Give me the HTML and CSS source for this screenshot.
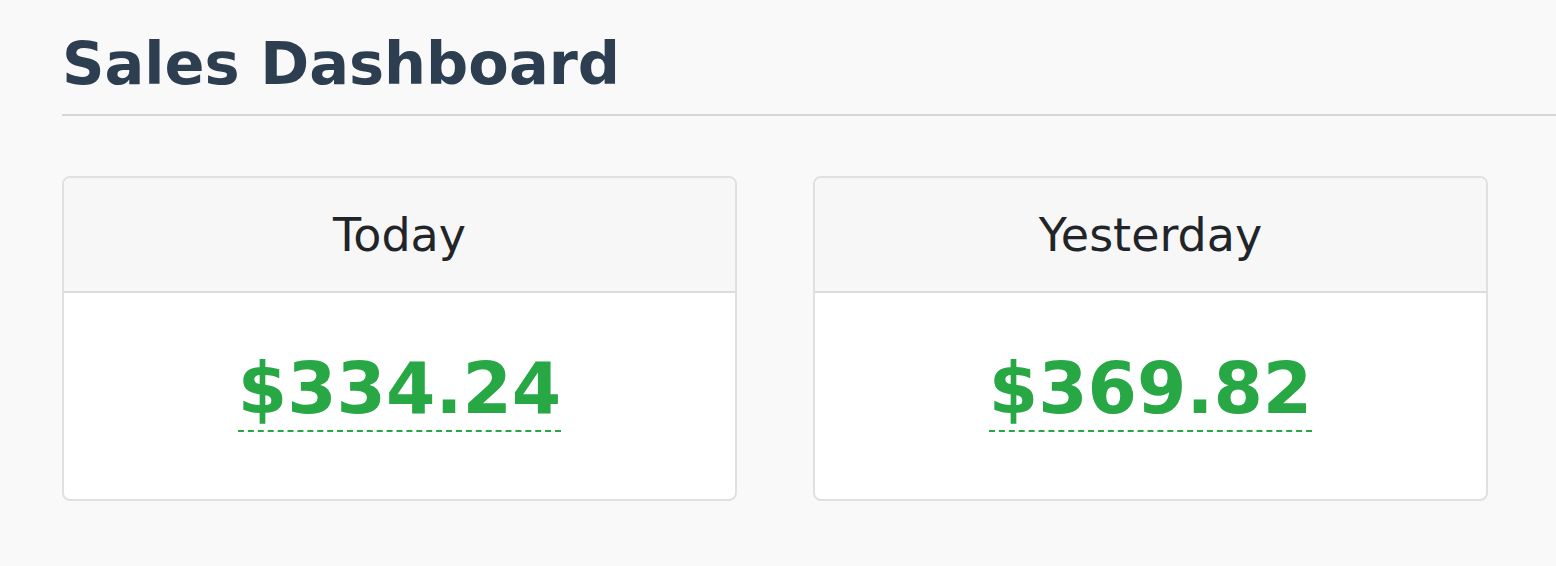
FILE: index.html
```html
<!DOCTYPE html>
<html lang="en">

<head>
    <meta charset="UTF-8">
    <meta name="viewport" content="width=device-width, initial-scale=1.0">
    <title>Sales Dashboard</title>
    <link rel="stylesheet" href="styles.css">
</head>

<body>
    <div class="page">
        <h1 class="title">Sales Dashboard</h1>
        <hr class="rule">

        <div class="cards">
            <div class="card">
                <div class="card-head">Today</div>
                <div class="card-body">
                    <span class="amount" title="Sales today">$334.24</span>
                </div>
            </div>

            <div class="card">
                <div class="card-head">Yesterday</div>
                <div class="card-body">
                    <span class="amount" title="Sales yesterday">$369.82</span>
                </div>
            </div>
        </div>
    </div>
</body>

</html>
```

FILE: styles.css
```css
body {
    margin: 0;
    background-color: #f9f9f9;
    font-family: "DejaVu Sans", Verdana, sans-serif;
}

.page {
    padding: 28px 0 0 62px;
}

.title {
    margin: 0;
    font-size: 59px;
    line-height: 72px;
    font-weight: bold;
    color: #2c3e50;
}

.rule {
    margin: 14px 0 0 0;
    border: 0;
    border-top: 2px solid #d6d6d2;
}

.cards {
    display: flex;
    gap: 76px;
    margin-top: 60px;
}

.card {
    width: 671px;
    border: 2px solid #e0e0e0;
    border-radius: 8px;
    background-color: #fff;
    overflow: hidden;
}

.card-head {
    height: 113px;
    display: flex;
    align-items: center;
    justify-content: center;
    background-color: #f7f7f7;
    border-bottom: 2px solid #dcdcdc;
    font-size: 46px;
    color: #212529;
}

.card-body {
    height: 206px;
    box-sizing: border-box;
    padding-top: 60px;
    text-align: center;
}

.amount {
    display: inline-block;
    font-size: 71px;
    line-height: 72px;
    font-weight: bold;
    color: #28a745;
    padding-bottom: 5px;
    border-bottom: 2px dashed #28a745;
}
```
